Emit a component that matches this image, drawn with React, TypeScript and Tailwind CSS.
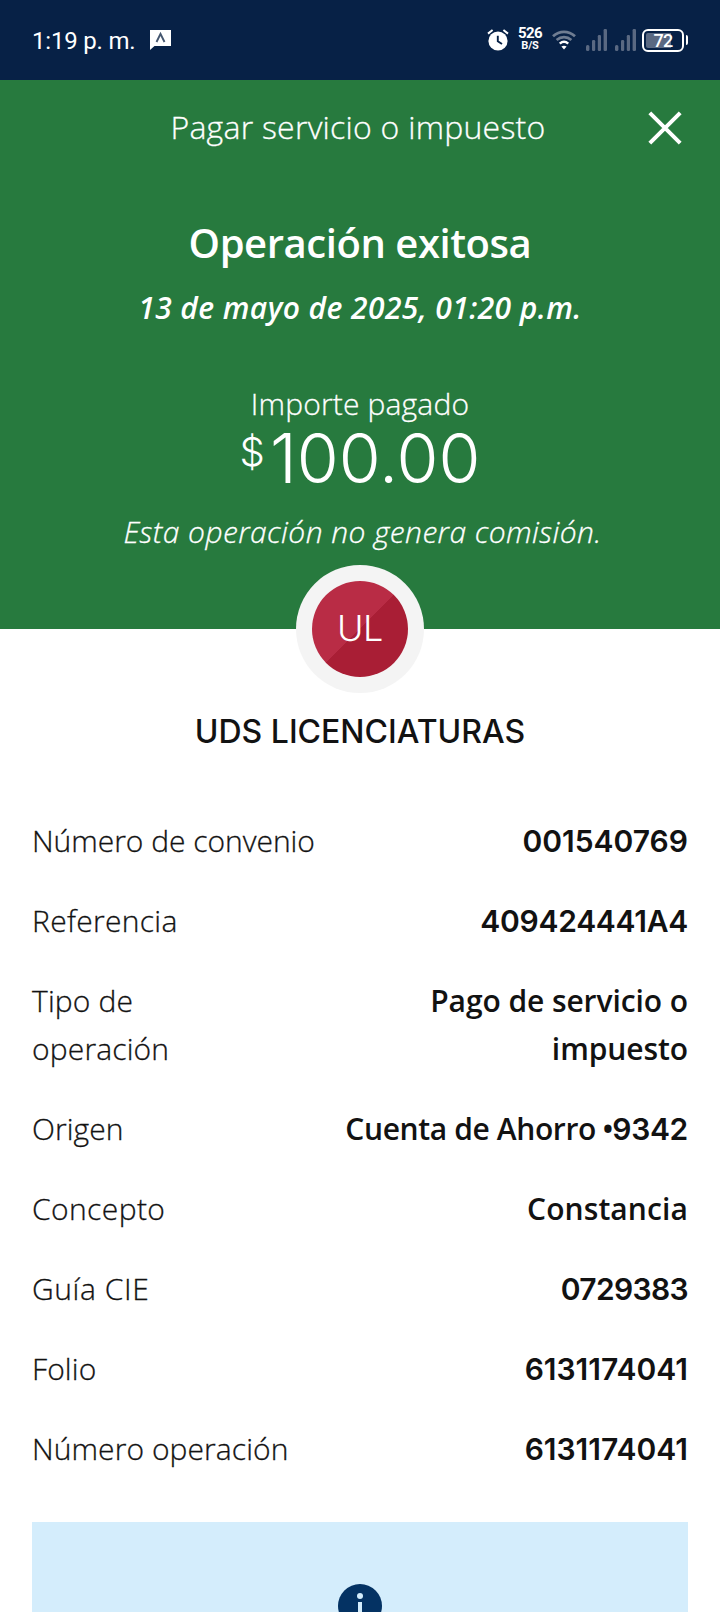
import type { ReactNode } from "react";

type Detail = {
  label: string;
  value: ReactNode;
  labelClass: string;
  valueClass: string;
};

const details: Detail[] = [
  {
    label: "Número de convenio",
    value: "001540769",
    labelClass: "tracking-[-0.03px]",
    valueClass: "font-['Inter',sans-serif]",
  },
  {
    label: "Referencia",
    value: "409424441A4",
    labelClass: "tracking-[0.3px]",
    valueClass: "font-['Inter',sans-serif] tracking-[-0.27px]",
  },
  {
    label: "Tipo de operación",
    value: "Pago de servicio o impuesto",
    labelClass: "w-[150px] tracking-[0.15px]",
    valueClass: "w-[280px] tracking-[-0.08px]",
  },
  {
    label: "Origen",
    value: (
      <>
        Cuenta de Ahorro <span className="-ml-px">•</span>
        <span className="-ml-px font-['Inter',sans-serif] tracking-[-0.3px]">9342</span>
      </>
    ),
    labelClass: "tracking-[0.05px]",
    valueClass: "tracking-[-0.38px]",
  },
  {
    label: "Concepto",
    value: "Constancia",
    labelClass: "tracking-[0.4px]",
    valueClass: "tracking-[0.1px]",
  },
  {
    label: "Guía CIE",
    value: "0729383",
    labelClass: "tracking-[0.6px]",
    valueClass: "font-['Inter',sans-serif] tracking-[-0.65px]",
  },
  {
    label: "Folio",
    value: "6131174041",
    labelClass: "tracking-[0.1px]",
    valueClass: "font-['Inter',sans-serif]",
  },
  {
    label: "Número operación",
    value: "6131174041",
    labelClass: "tracking-[0.08px]",
    valueClass: "font-['Inter',sans-serif]",
  },
];

const SignalIcon = () => (
  <svg width="21" height="22" viewBox="0 0 21 22" fill="#5a6982">
    <rect x="0" y="16" width="3.4" height="6" rx="1.5" />
    <rect x="6" y="11" width="3.2" height="11" rx="1.2" />
    <rect x="11.8" y="6" width="3.2" height="16" rx="1.2" />
    <rect x="17.6" y="0" width="3.4" height="22" rx="1.2" />
  </svg>
);

const StatusBar = () => {
  return (
    <div className="flex h-20 items-center bg-[#072146] pl-8 pr-8 text-white font-['Roboto',sans-serif]">
      <span className="pt-0.5 text-2xl leading-8 tracking-[-0.2px]">1:19 p. m.</span>
      <svg className="ml-auto mr-[316px]" width="21" height="20" viewBox="0 0 21 20">
        <path d="M0 0H21V16H4.5L0 20Z" fill="#fff" />
        <path d="M6.5 12L10.5 3.8L14.5 12" fill="none" stroke="#44566f" strokeWidth="1.9" />
      </svg>
      {/* alarm */}
      <svg width="22" height="22" viewBox="0 0 22 22" fill="none">
        <circle cx="11" cy="12" r="9.6" fill="#fff" />
        <path d="M1 4.6L5.6 1M21 4.6L16.4 1" stroke="#fff" strokeWidth="2" />
        <path d="M10.8 6.8V12.2L15 15" stroke="#072146" strokeWidth="1.9" />
      </svg>
      <div className="ml-[9px] flex w-6 flex-col items-center pb-1 font-bold">
        <span className="text-[15px] leading-[14px] tracking-[-0.6px]">526</span>
        <span className="text-[11px] leading-[11px] tracking-[-0.2px]">B/S</span>
      </div>
      {/* wifi */}
      <svg className="ml-2.5" width="24" height="20" viewBox="0 0 24 20" fill="none">
        <path d="M1 6.2C7.5 0.3 16.5 0.3 23 6.2" stroke="#6f7d92" strokeWidth="2.8" />
        <path d="M4.6 10C9 6.2 15 6.2 19.4 10" stroke="#6f7d92" strokeWidth="2.6" />
        <path d="M7.8 13.6C10.4 11.3 13.6 11.3 16.2 13.6" stroke="#fff" strokeWidth="2.6" />
        <path d="M12 19.4L9.4 16.6C11 15.3 13 15.3 14.6 16.6Z" fill="#fff" />
      </svg>
      <span className="ml-2.5">
        <SignalIcon />
      </span>
      <span className="ml-2">
        <SignalIcon />
      </span>
      <div className="ml-1.5 flex items-center gap-0.5">
        <div className="flex h-[23px] w-[42px] rounded-[6px] border-2 border-white p-[2px]">
          <div className="h-full w-[25px] rounded-l-[2px] bg-[#5a6982]">
            <span className="block w-[34px] text-center text-[18px] leading-[15px] font-medium tracking-[-0.8px]">
              72
            </span>
          </div>
        </div>
        <div className="h-[10px] w-0.5 rounded-r-sm bg-white" />
      </div>
    </div>
  );
};

const Summary = () => {
  return (
    <section className="flex h-[549px] flex-col items-center bg-[#277a3e] text-center text-white">
      <header className="flex h-[94px] w-full items-center pr-[38px] pl-[68px]">
        <h1 className="flex-1 text-[32px] leading-[48px] font-light tracking-[0.25px] [-webkit-text-stroke:0.3px]">
          Pagar servicio o impuesto
        </h1>
        <svg className="mt-0.5" width="34" height="34" viewBox="0 0 34 34" fill="none">
          <path d="M1.8 1.8L32.2 32.2M32.2 1.8L1.8 32.2" stroke="#fff" strokeWidth="4" />
        </svg>
      </header>
      <h2 className="mt-[41px] text-[40px] leading-[56px] font-semibold tracking-[-0.44px]">
        Operación exitosa
      </h2>
      <p className="mt-[13px] text-[30px] leading-[48px] font-semibold italic tracking-[0.41px]">
        13 de mayo de 2025, 01:20 p.m.
      </p>
      <p className="mt-12 text-[30px] leading-[48px] font-light tracking-[0.15px] [-webkit-text-stroke:0.3px]">
        Importe pagado
      </p>
      <div className="flex items-start gap-[5px] font-['Inter',sans-serif] font-light">
        <span className="pt-[4px] text-[40px] leading-[40px]">$</span>
        <span className="text-[68px] leading-[60px]">100.00</span>
      </div>
      <p className="mt-5 pl-[5px] text-[30px] leading-[48px] font-light italic tracking-[0.42px] [-webkit-text-stroke:0.3px]">
        Esta operación no genera comisión.
      </p>
    </section>
  );
};

const App = () => {
  return (
    <main className="h-[1612px] w-[720px] overflow-hidden bg-white font-['Open_Sans','Noto_Sans',sans-serif] text-[#121212]">
      <StatusBar />
      <Summary />
      <div className="relative mx-auto -mt-16 flex size-32 items-center justify-center rounded-full bg-[#f4f4f4]">
        <div className="flex size-24 items-center justify-center rounded-full bg-[linear-gradient(135deg,#b92c45_50%,#a91e35_50%)]">
          <span className="pb-0.5 font-['Inter',sans-serif] text-[36px] leading-[44px] font-light tracking-[-0.4px] text-white">
            UL
          </span>
        </div>
      </div>
      <h3 className="mt-[15px] text-center font-['Inter',sans-serif] text-[32px] leading-[48px] font-medium">
        UDS LICENCIATURAS
      </h3>
      <div className="mt-[61px] flex flex-col gap-8 px-8 text-[30px] leading-[48px]">
        {details.map((item) => (
          <div key={item.label} className="flex justify-between">
            <span className={`font-light [-webkit-text-stroke:0.3px] ${item.labelClass}`}>
              {item.label}
            </span>
            <span className={`text-right font-semibold ${item.valueClass}`}>{item.value}</span>
          </div>
        ))}
      </div>
      <div className="mx-8 mt-[49px] flex h-[200px] justify-center bg-[#d4edfc] pt-[62px]">
        <svg width="44" height="44" viewBox="0 0 44 44">
          <circle cx="22" cy="22" r="22" fill="#043263" />
          <circle cx="22" cy="12" r="3" fill="#d4edfc" />
          <rect x="20" y="18" width="4" height="17" fill="#d4edfc" />
        </svg>
      </div>
    </main>
  );
};

export default App;
